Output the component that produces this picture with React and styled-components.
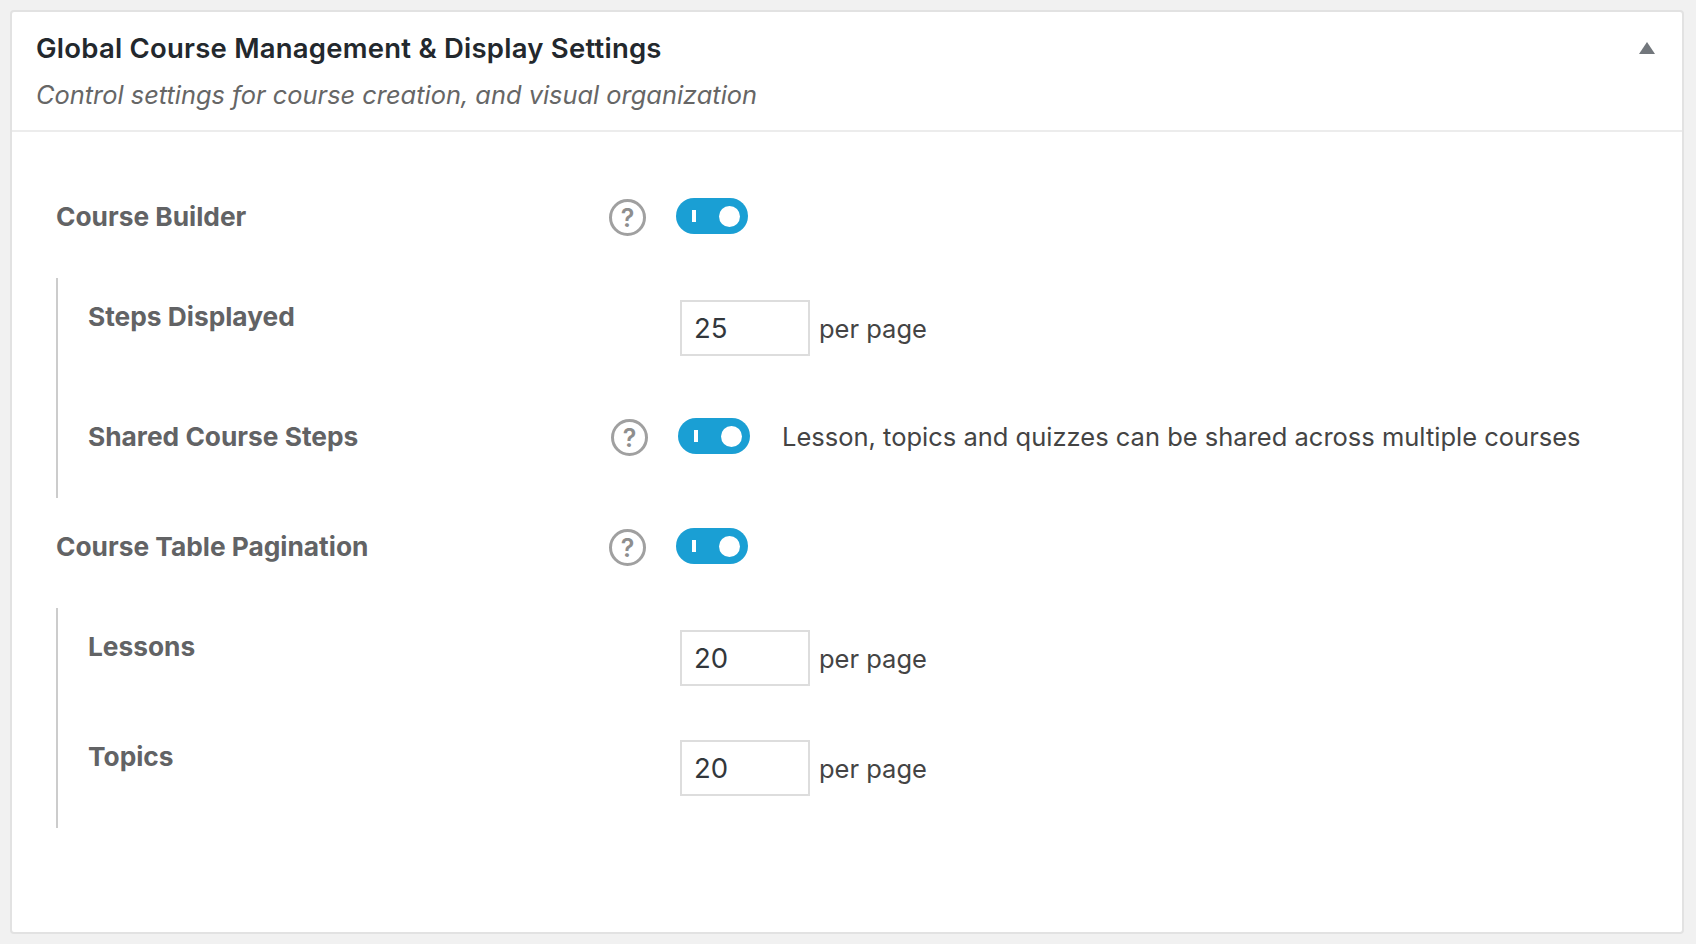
import React from "react";
import styled, { createGlobalStyle } from "styled-components";

const GlobalStyle = createGlobalStyle`
	html, body {
		margin: 0;
		padding: 0;
		background: #f1f1f1;
		font-family: Inter, "Liberation Sans", sans-serif;
	}
	* {
		box-sizing: border-box;
	}
`;

const Card = styled.div`
	width: 1674px;
	height: 924px;
	margin: 10px 0 0 10px;
	background: #fff;
	border: 2px solid #e2e2e2;
	border-radius: 4px;
`;
const CardHeader = styled.div`
	height: 120px;
	padding: 18px 27px 0 24px;
	border-bottom: 2px solid #ececec;
	display: flex;
	justify-content: space-between;
	align-items: flex-start;
`;
const Title = styled.h2`
	margin: 0;
	height: 36px;
	font-size: 27.5px;
	line-height: 36px;
	font-weight: 600;
	letter-spacing: 0.23px;
	color: #23282d;
`;
const Subtitle = styled.p`
	margin: 11px 0 0;
	font-size: 25.4px;
	line-height: 36px;
	font-style: italic;
	color: #666;
`;
const Caret = styled.div`
	width: 0;
	height: 0;
	margin-top: 12px;
	border-left: 8px solid transparent;
	border-right: 8px solid transparent;
	border-bottom: 12px solid #72777c;
`;
const Settings = styled.div`
	padding: 66px 0 0 44px;
`;
const MainRow = styled.div`
	height: 36px;
	display: flex;
	align-items: center;
`;
const Label = styled.div`
	width: ${(props) => props.width}px;
	font-size: 26.3px;
	font-weight: 700;
	color: #626365;
`;
const Help = styled.span`
	width: 37px;
	height: 37px;
	margin-top: 3px;
	border: 3px solid #a0a0a0;
	border-radius: 50%;
	display: flex;
	align-items: center;
	justify-content: center;
	font-size: 25px;
	font-weight: 600;
	color: #8e8e8e;
`;
const Toggle = styled.span`
	width: 72px;
	height: 36px;
	margin-left: 30px;
	padding: 0 8px 0 16px;
	border-radius: 18px;
	background: #1a9fd4;
	display: flex;
	align-items: center;
	justify-content: space-between;
	&::before {
		content: "";
		width: 4px;
		height: 12px;
		background: #fff;
	}
	&::after {
		content: "";
		width: 21px;
		height: 21px;
		border-radius: 50%;
		background: #fff;
	}
`;
const SubGroup = styled.div`
	height: 220px;
	margin: 44px 0 30px;
	padding-left: 30px;
	border-left: 2px solid #ccc;
	display: flex;
	flex-direction: column;
`;
const InputRow = styled.div`
	height: 56px;
	margin-top: ${(props) => props.top}px;
	display: flex;
	align-items: flex-start;
`;
const InputLabel = styled(Label)`
	padding-top: 1px;
`;
const NumberBox = styled.div`
	width: 130px;
	height: 56px;
	padding-left: 12px;
	border: 2px solid #ddd;
	background: #fff;
	font-size: 27.5px;
	line-height: 53px;
	color: #32373c;
`;
const Unit = styled.span`
	margin-left: 9px;
	font-size: 25.5px;
	line-height: 58px;
	color: #444;
`;
const ToggleRow = styled.div`
	height: 36px;
	margin-top: ${(props) => props.top}px;
	display: flex;
	align-items: center;
`;
const Description = styled.span`
	margin-left: 32px;
	font-size: 25.5px;
	color: #444;
`;

const NumberRow = ({ label, value, top }) => (
	<InputRow top={top}>
		<InputLabel width={592}>{label}</InputLabel>
		<NumberBox>{value}</NumberBox>
		<Unit>per page</Unit>
	</InputRow>
);

export default function App() {
	return (
		<>
			<GlobalStyle />
			<Card>
				<CardHeader>
					<div>
						<Title>Global Course Management &amp; Display Settings</Title>
						<Subtitle>Control settings for course creation, and visual organization</Subtitle>
					</div>
					<Caret />
				</CardHeader>
				<Settings>
					<MainRow>
						<Label width={553}>Course Builder</Label>
						<Help>?</Help>
						<Toggle />
					</MainRow>
					<SubGroup>
						<NumberRow label="Steps Displayed" value="25" top={22} />
						<ToggleRow top={62}>
							<Label width={523}>Shared Course Steps</Label>
							<Help>?</Help>
							<Toggle />
							<Description>Lesson, topics and quizzes can be shared across multiple courses</Description>
						</ToggleRow>
					</SubGroup>
					<MainRow>
						<Label width={553}>Course Table Pagination</Label>
						<Help>?</Help>
						<Toggle />
					</MainRow>
					<SubGroup>
						<NumberRow label="Lessons" value="20" top={22} />
						<NumberRow label="Topics" value="20" top={54} />
					</SubGroup>
				</Settings>
			</Card>
		</>
	);
}
